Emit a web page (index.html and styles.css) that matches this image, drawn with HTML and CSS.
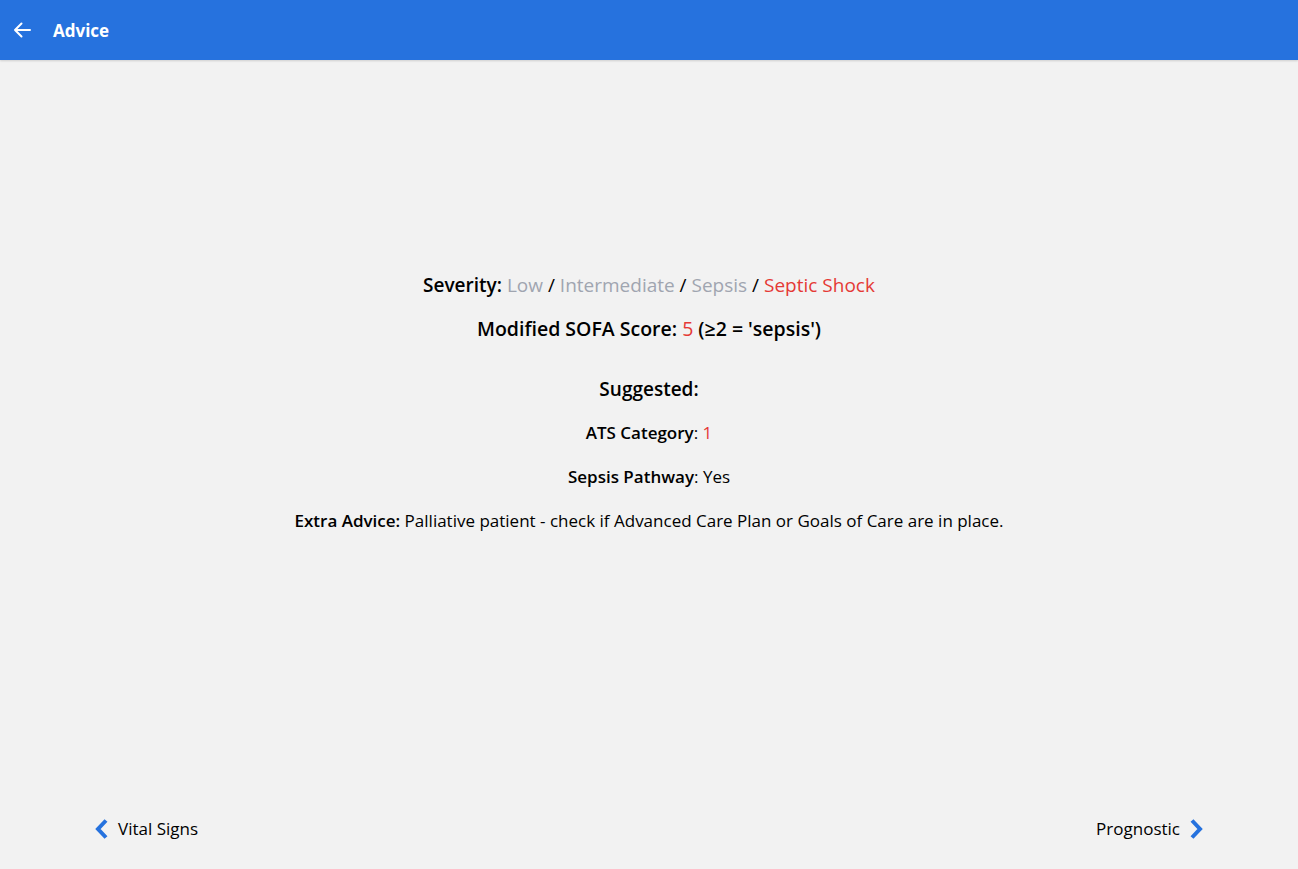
FILE: index.html
```html
<!DOCTYPE html>
<html lang="en">
<head>
<meta charset="utf-8">
<title>Advice</title>
<link rel="stylesheet" href="styles.css">
</head>
<body>
<div class="page">
  <header class="topbar">
    <svg class="back" width="20" height="20" viewBox="0 0 20 20" aria-hidden="true">
      <path d="M18 10H3M9.5 3.5L3 10l6.5 6.5" fill="none" stroke="#fff" stroke-width="2" stroke-linecap="round" stroke-linejoin="round"/>
    </svg>
    <h1 class="title">Advice</h1>
  </header>
  <main class="content">
    <div class="line big"><b>Severity:</b> <span class="muted">Low</span> / <span class="muted">Intermediate</span> / <span class="muted">Sepsis</span> / <span class="red">Septic Shock</span></div>
    <div class="line big semi sofa">Modified SOFA Score: <span class="red normal">5</span> (≥2 = 'sepsis')</div>
    <div class="line big semi gapped">Suggested:</div>
    <div class="line"><b>ATS Category</b>: <span class="red">1</span></div>
    <div class="line"><b>Sepsis Pathway</b>: Yes</div>
    <div class="line"><b>Extra Advice:</b> Palliative patient - check if Advanced Care Plan or Goals of Care are in place.</div>
  </main>
  <footer class="nav">
    <a class="navlink">
      <svg width="16" height="22" viewBox="0 0 16 22" aria-hidden="true"><path d="M12 2.5L4 11l8 8.5" fill="none" stroke="#2672de" stroke-width="4" stroke-linejoin="miter"/></svg>
      <span>Vital Signs</span>
    </a>
    <a class="navlink">
      <span>Prognostic</span>
      <svg width="16" height="22" viewBox="0 0 16 22" aria-hidden="true"><path d="M4 2.5L12 11l-8 8.5" fill="none" stroke="#2672de" stroke-width="4" stroke-linejoin="miter"/></svg>
    </a>
  </footer>
</div>
</body>
</html>
```
FILE: styles.css
```css
* { box-sizing: border-box; }
html, body { margin: 0; padding: 0; }
body {
  background: #f2f2f2;
  font-family: "Open Sans", "Liberation Sans", sans-serif;
  color: #000;
}
.page {
  height: 869px;
  display: flex;
  flex-direction: column;
}
.topbar {
  height: 60px;
  background: #2672de;
  display: flex;
  align-items: center;
  padding-left: 12px;
  gap: 21px;
  flex-shrink: 0;
  box-shadow: 0 1px 2px rgba(0,0,0,0.15);
}
.back { display: block; }
.title {
  margin: 0;
  color: #fff;
  font-size: 17px;
  font-weight: 700;
}
.content {
  flex: 1;
  padding-top: 213px;
  display: flex;
  flex-direction: column;
  align-items: center;
  gap: 20px;
}
.line {
  font-size: 17px;
  line-height: 24px;
  text-align: center;
}
.line b { font-weight: 600; }
.big { font-size: 19px; }
.sofa { font-size: 19.5px; }
.semi { font-weight: 600; }
.normal { font-weight: 400; }
.gapped { margin-top: 16px; }
.muted { color: #a0a5b0; }
.red { color: #e53935; }
.nav {
  display: flex;
  justify-content: space-between;
  align-items: center;
  padding: 0 94px 28px 94px;
  height: 52px;
}
.navlink {
  display: flex;
  align-items: center;
  gap: 8px;
  font-size: 17px;
  line-height: 24px;
  color: #000;
}
.navlink svg { display: block; }
```
